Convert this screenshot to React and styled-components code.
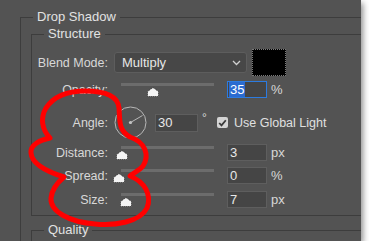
import styled, { createGlobalStyle } from 'styled-components';

const GlobalStyle = createGlobalStyle`
  html, body {
    margin: 0;
    background: #ffffff;
  }
  body {
    font-family: "Liberation Sans", Arial, sans-serif;
  }
`;

const Panel = styled.div`
  position: relative;
  width: 361px;
  height: 241px;
  box-sizing: border-box;
  padding-top: 9px;
  padding-left: 20px;
  background: #535353;
  overflow: hidden;
  box-shadow: 2px 3px 6px rgba(0, 0, 0, 0.45);
  color: #dadada;
`;

const Group = styled.fieldset`
  margin: 0;
  margin-left: ${p => p.$indent || 0}px;
  margin-top: ${p => p.$top || 0}px;
  padding: ${p => p.$pad || '0'};
  min-width: 0;
  width: ${p => p.$width || 'auto'};
  min-height: ${p => p.$minh || 0}px;
  border: 1px solid #3d3d3d;
`;

const Legend = styled.legend`
  margin-left: 12px;
  padding: 0 4px;
  font-size: ${p => p.$big ? 13 : 12.5}px;
  line-height: 16px;
  color: #e2e2e2;
`;

const Rows = styled.div`
  display: flex;
  flex-direction: column;
`;

const Row = styled.div`
  display: grid;
  grid-template-columns: 76px auto;
  column-gap: 6px;
  align-items: center;
  height: ${p => p.$h}px;
  margin-top: ${p => p.$mt || 0}px;
`;

const Label = styled.div`
  text-align: right;
  font-size: 12.5px;
  color: #d8d8d8;
  white-space: nowrap;
`;

const Controls = styled.div`
  display: flex;
  align-items: center;
  height: 100%;
`;

const Select = styled.div`
  display: flex;
  align-items: center;
  justify-content: space-between;
  box-sizing: border-box;
  width: 133px;
  height: 21px;
  padding: 0 5px 0 7px;
  background: #474747;
  border: 1px solid #5d5d5d;
  border-radius: 3px;
  font-size: 13px;
  color: #e6e6e6;
`;

const Swatch = styled.div`
  box-sizing: border-box;
  width: 34px;
  height: 27px;
  margin-left: 5px;
  background: #000;
  border: 1px dotted #7a7a7a;
`;

const SliderBox = styled.div`
  position: relative;
  width: 95px;
  height: 17px;
  margin-left: 5px;
`;

const Track = styled.div`
  margin: 2px 0 0 2px;
  height: 3px;
  background: #6c6c6c;
`;

const Thumb = styled.svg`
  position: absolute;
  top: 6px;
  left: ${p => p.$pos - 6}px;
`;

const Field = styled.div`
  box-sizing: border-box;
  width: ${p => p.$w || 40}px;
  height: ${p => p.$h || 17}px;
  margin-left: ${p => p.$ml ?? 13}px;
  display: flex;
  align-items: center;
  padding-left: ${p => p.$focus ? 1 : 2}px;
  background: #454545;
  border: 1px solid ${p => p.$focus ? '#2c7be0' : '#5e5e5e'};
  font-size: 13px;
  color: #e8e8e8;
`;

const Selected = styled.span`
  display: flex;
  align-items: center;
  height: 100%;
  padding: 0 1px;
  background: #2b6bd0;
  color: #ffffff;
`;

const Unit = styled.span`
  margin-left: 4px;
  font-size: 13px;
  color: #d8d8d8;
`;

const Degree = styled.span`
  align-self: flex-start;
  width: 19px;
  margin-top: 5px;
  padding-left: 4px;
  box-sizing: border-box;
  font-size: 12px;
  color: #d8d8d8;
`;

const Check = styled.div`
  display: flex;
  align-items: center;
  justify-content: center;
  width: 11px;
  height: 11px;
  border-radius: 2px;
  background: #d4d4d4;
`;

const CheckText = styled.span`
  margin-left: 6px;
  font-size: 12.5px;
  color: #e0e0e0;
`;

const Marker = styled.svg`
  position: absolute;
  left: 0;
  top: 0;
  pointer-events: none;
`;

function Slider({ pos }) {
  return (
    <SliderBox>
      <Track />
      <Thumb $pos={pos} width="12" height="10" viewBox="0 0 12 10">
        <polygon
          points="6,0.5 11.5,4.5 11.5,9.5 0.5,9.5 0.5,4.5"
          fill="#f4f4f4"
          stroke="#2a2a2a"
          strokeDasharray="1 1"
        />
      </Thumb>
    </SliderBox>
  );
}

function SliderRow({ label, pos, value, unit, mt }) {
  return (
    <Row $h={17} $mt={mt}>
      <Label>{label}</Label>
      <Controls>
        <Slider pos={pos} />
        <Field>{value}</Field>
        <Unit>{unit}</Unit>
      </Controls>
    </Row>
  );
}

export default function App() {
  return (
    <>
      <GlobalStyle />
      <Panel>
        <Group $width="380px" $pad="1px 0 0 0" $minh={260}>
          <Legend $big>Drop Shadow</Legend>
          <Group $indent={10} $pad="7px 0 7px 0">
            <Legend $big>Structure</Legend>
            <Rows>
              <Row $h={27}>
                <Label>Blend Mode:</Label>
                <Controls>
                  <Select>
                    Multiply
                    <svg width="9" height="6" viewBox="0 0 9 6">
                      <path d="M1 1 L4.5 4.5 L8 1" fill="none" stroke="#d0d0d0" strokeWidth="1.3" />
                    </svg>
                  </Select>
                  <Swatch />
                </Controls>
              </Row>
              <Row $h={17} $mt={5}>
                <Label>Opacity:</Label>
                <Controls>
                  <Slider pos={34} />
                  <Field $focus><Selected>35</Selected></Field>
                  <Unit>%</Unit>
                </Controls>
              </Row>
              <Row $h={32} $mt={8}>
                <Label>Angle:</Label>
                <Controls>
                  <svg width="33" height="33" viewBox="0 0 33 33">
                    <circle cx="16.5" cy="16.5" r="15.5" fill="none" stroke="#b8b8b8" strokeWidth="1" />
                    <circle cx="16.5" cy="16.5" r="1.6" fill="#c8c8c8" />
                    <line x1="16.5" y1="16.5" x2="28.5" y2="9.5" stroke="#b8b8b8" strokeWidth="1" />
                  </svg>
                  <Field $ml={8} $w={43} $h={18}>30</Field>
                  <Degree>°</Degree>
                  <Check>
                    <svg width="9" height="8" viewBox="0 0 9 8">
                      <path d="M1.2 4 L3.5 6.4 L7.8 1.2" fill="none" stroke="#3a3a3a" strokeWidth="1.8" />
                    </svg>
                  </Check>
                  <CheckText>Use Global Light</CheckText>
                </Controls>
              </Row>
              <SliderRow label="Distance:" pos={3} value="3" unit="px" mt={6} />
              <SliderRow label="Spread:" pos={0} value="0" unit="%" mt={6} />
              <SliderRow label="Size:" pos={7} value="7" unit="px" mt={7} />
            </Rows>
          </Group>
          <Group $indent={10} $top={6} $minh={40}>
            <Legend $big>Quality</Legend>
          </Group>
        </Group>
        <Marker width="361" height="241" viewBox="0 0 361 241">
          <path
            d="M 85 91
               C 105 91, 118 96, 119 108
               C 120 120, 118 130, 130 137
               C 145 142, 150 155, 143 166
               C 139 171, 133 173, 130 176
               C 145 182, 152 195, 147 208
               C 140 222, 115 226, 95 224
               C 70 222, 50 212, 51 198
               C 52 188, 58 182, 64 177
               C 48 172, 32 165, 31 153
               C 30 145, 40 140, 50 138
               C 42 130, 40 118, 46 108
               C 54 96, 68 91, 85 91 Z"
            fill="none"
            stroke="#ff0000"
            strokeWidth="5"
            strokeLinejoin="round"
          />
        </Marker>
      </Panel>
    </>
  );
}
